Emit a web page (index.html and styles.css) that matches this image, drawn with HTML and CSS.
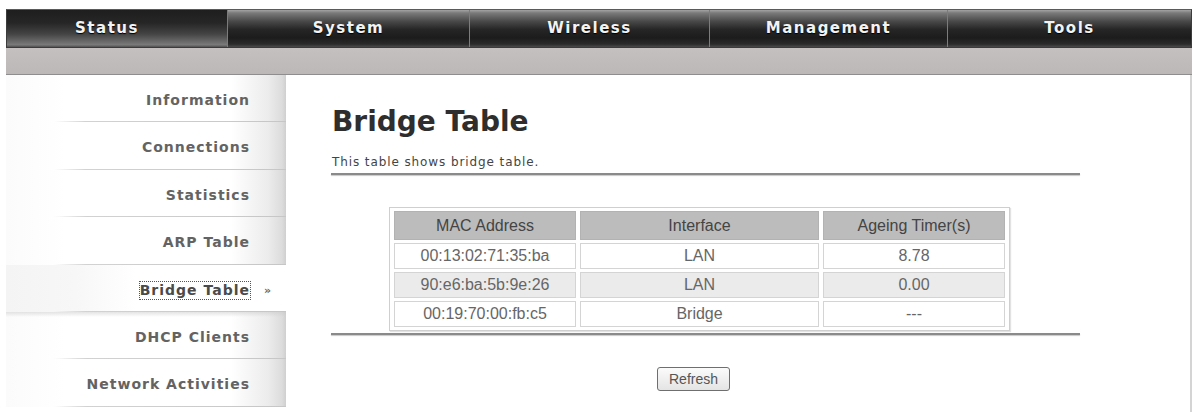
FILE: index.html
```html
<!DOCTYPE html>
<html>
<head>
<meta charset="utf-8">
<title>Bridge Table</title>
<link rel="stylesheet" href="styles.css">
</head>
<body>
<div class="page">
  <nav class="topnav">
    <a class="tab tab-status active">Status</a>
    <a class="tab tab-system">System</a>
    <a class="tab tab-wireless">Wireless</a>
    <a class="tab tab-management">Management</a>
    <a class="tab tab-tools">Tools</a>
  </nav>
  <div class="subbar"></div>
  <div class="main">
    <ul class="sidebar">
      <li class="item"><span class="label">Information</span></li>
      <li class="item"><span class="label">Connections</span></li>
      <li class="item"><span class="label">Statistics</span></li>
      <li class="item"><span class="label">ARP Table</span></li>
      <li class="item current"><span class="label focus">Bridge Table</span><span class="arrow">&raquo;</span></li>
      <li class="item after-current"><span class="label">DHCP Clients</span></li>
      <li class="item"><span class="label">Network Activities</span></li>
    </ul>
    <section class="content">
      <h1 class="title">Bridge Table</h1>
      <p class="desc">This table shows bridge table.</p>
      <div class="rule"></div>
      <table class="bridge">
        <thead>
          <tr><th class="col-mac">MAC Address</th><th class="col-if">Interface</th><th class="col-age">Ageing Timer(s)</th></tr>
        </thead>
        <tbody>
          <tr><td>00:13:02:71:35:ba</td><td>LAN</td><td>8.78</td></tr>
          <tr class="alt"><td>90:e6:ba:5b:9e:26</td><td>LAN</td><td>0.00</td></tr>
          <tr><td>00:19:70:00:fb:c5</td><td>Bridge</td><td>---</td></tr>
        </tbody>
      </table>
      <div class="rule rule-bottom"></div>
      <div class="actions"><button class="btn" type="button">Refresh</button></div>
    </section>
  </div>
</div>
</body>
</html>
```
FILE: styles.css
```css
html, body {
  margin: 0;
  padding: 0;
  background: #ffffff;
}
body {
  font-family: "DejaVu Sans", Verdana, sans-serif;
  width: 1198px;
  height: 412px;
  overflow: hidden;
}
.page {
  padding: 9px 6px 0 6px;
}

/* top navigation */
.topnav {
  display: flex;
  height: 39px;
  box-sizing: border-box;
  border: 1px solid #3c3c3c;
  border-top-color: #5a5a5a;
  background: #222;
}
.tab {
  display: flex;
  align-items: center;
  justify-content: center;
  box-sizing: border-box;
  color: #f3f3f3;
  font-weight: bold;
  font-size: 15px;
  letter-spacing: 1.5px;
  text-shadow: 0 1px 1px #000;
  padding-bottom: 2px;
  background: linear-gradient(#a4a4a4 0, #7a7a7a 8%, #4a4a4a 30%, #262626 52%, #1c1c1c 75%, #2a2a2a 92%, #4a4a4a 100%);
  border-left: 1px solid #7c7c7c;
}
.tab-status { width: 220px; border-left: none; padding-right: 20px; }
.tab-system { width: 242px; }
.tab-wireless { width: 240px; }
.tab-management { width: 238px; }
.tab-tools { width: 244px; }
.tab.active {
  background: linear-gradient(#1e1e1e 0, #262626 35%, #444 65%, #6e6e6e 88%, #7a7a7a 94%, #505050 100%);
}

.subbar {
  height: 26px;
  background: linear-gradient(#c4c0c0, #bcb8b8);
  border-bottom: 1px solid #8e8e8e;
}

.main {
  display: flex;
  height: 337px;
}

/* sidebar */
.sidebar {
  list-style: none;
  margin: 0;
  padding: 0;
  width: 280px;
  flex: none;
}
.item {
  display: flex;
  justify-content: flex-end;
  align-items: flex-start;
  box-sizing: border-box;
  height: 47.4px;
  padding: 17px 36px 0 0;
  background:
    linear-gradient(to right, rgba(255,255,255,0) 0, rgba(255,255,255,0) 48px, #d2d2d2 80px, #c6c6c6 100%) left bottom / 100% 1px no-repeat,
    linear-gradient(to right, #fbfbfb 0, #ffffff 60px, #ffffff 225px, #ececec 262px, #dcdcdc 276px, #cfcfcf 280px);
}
.label {
  font-size: 14px;
  line-height: 17px;
  font-weight: bold;
  letter-spacing: 1px;
  color: #636363;
}
.item.current {
  padding-right: 8px;
  background:
    linear-gradient(to right, rgba(255,255,255,0) 0, rgba(255,255,255,0) 48px, #d2d2d2 80px, #c6c6c6 100%) left bottom / 100% 1px no-repeat,
    linear-gradient(to right, #f4f4f4 0, #f7f7f7 70px, #ffffff 130px, #ffffff 100%);
}
.item.current .label {
  color: #4a4a4a;
}
.focus {
  outline: 1px dotted #555;
  outline-offset: 0;
}
.arrow {
  font-size: 11px;
  font-weight: bold;
  line-height: 17px;
  color: #666;
  margin-left: 14px;
  width: 14px;
}
.item.after-current {
  background:
    linear-gradient(to right, rgba(255,255,255,0) 0, rgba(255,255,255,0) 48px, #d2d2d2 80px, #c6c6c6 100%) left bottom / 100% 1px no-repeat,
    linear-gradient(rgba(200,200,200,0.5) 0, rgba(255,255,255,0) 5px) left top / 100% 6px no-repeat,
    linear-gradient(to right, #fbfbfb 0, #ffffff 60px, #ffffff 225px, #ececec 262px, #dcdcdc 276px, #cfcfcf 280px);
}

/* content */
.content {
  flex: 1;
  padding: 0 110px 0 45px;
  border-right: 2px solid #d4d4d4;
}
.title {
  margin: 31px 0 0 1px;
  font-size: 28px;
  line-height: 32px;
  font-weight: bold;
  color: #2e2e2e;
}
.desc {
  margin: 16px 0 0 1px;
  font-size: 12px;
  line-height: 16px;
  letter-spacing: 0.9px;
  color: #444;
}
.rule {
  margin-top: 3px;
  height: 2px;
  background: #8a8a8a;
  box-shadow: 0 1px 1px #c8c8c8;
}
.bridge {
  margin: 32px 0 0 58px;
  border: 1px solid #cfcfcf;
  border-spacing: 4px 3px;
  box-shadow: 1px 1px 1px #e2e2e2;
  font-family: "Liberation Sans", Arial, sans-serif;
  font-size: 16px;
  color: #666;
}
.bridge th {
  height: 29px;
  box-sizing: border-box;
  padding: 0;
  background: #bcbcbc;
  border: 1px solid #b2b2b2;
  font-weight: normal;
  color: #444;
  text-align: center;
}
.col-mac { width: 182px; }
.col-if { width: 239px; }
.col-age { width: 182px; }
.bridge td {
  height: 26px;
  box-sizing: border-box;
  padding: 0;
  border: 1px solid #d4d4d4;
  text-align: center;
  background: #fff;
}
.bridge tr.alt td {
  background: #ebebeb;
}
.rule-bottom {
  margin-top: 2px;
}
.actions {
  padding: 32px 0 0 326px;
}
.btn {
  width: 73px;
  height: 24px;
  margin: 0;
  padding: 0;
  border: 1px solid #6f6f6f;
  border-radius: 3px;
  background: linear-gradient(#fbfbfb, #e4e4e4);
  font-family: "Liberation Sans", Arial, sans-serif;
  font-size: 14px;
  color: #555;
}
```
